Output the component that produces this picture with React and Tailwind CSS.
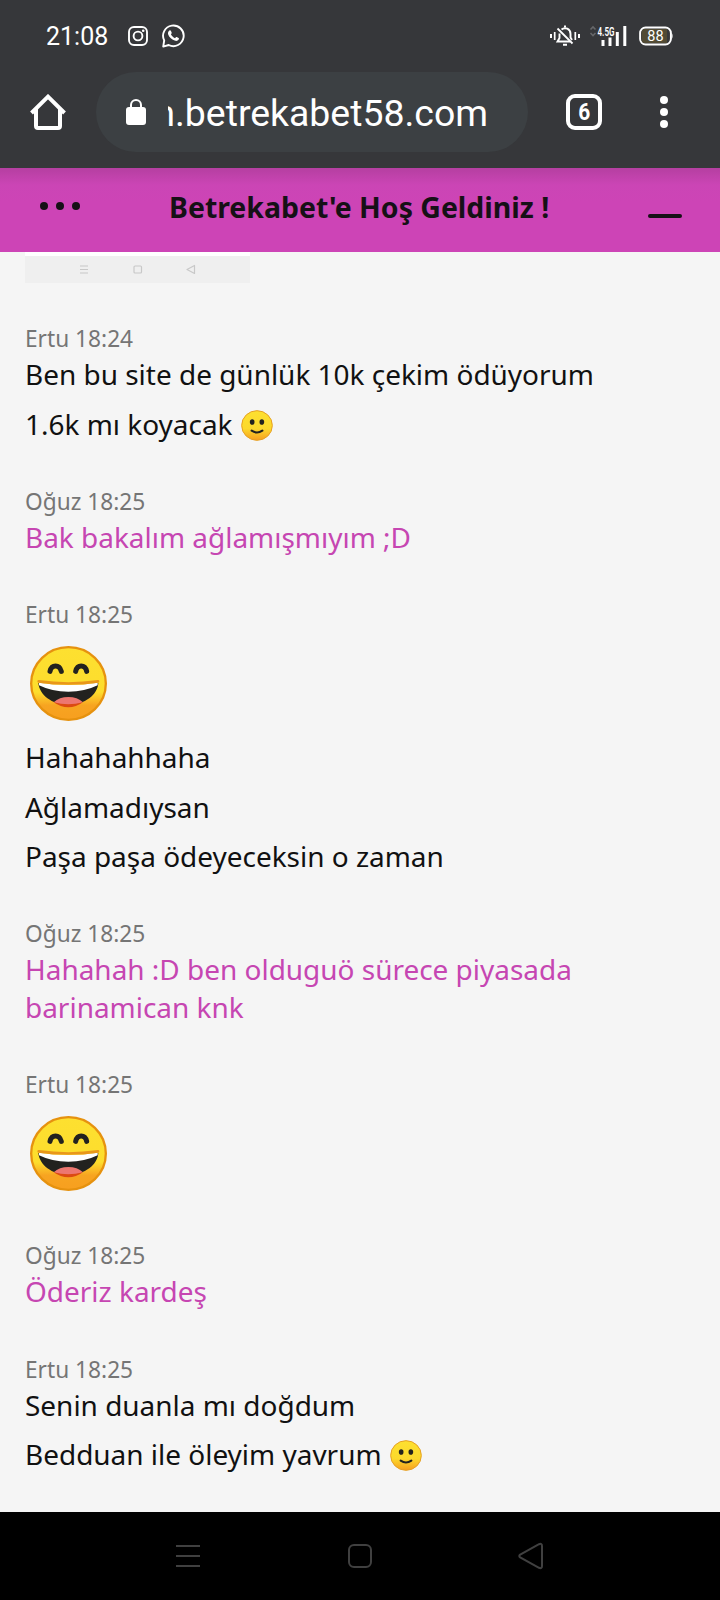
import React from "react";

const messages = [
  {
    name: "Ertu",
    time: "18:24",
    lines: [
      { text: "Ben bu site de günlük 10k çekim ödüyorum" },
      { text: "1.6k mı koyacak", smile: true },
    ],
  },
  {
    name: "Oğuz",
    time: "18:25",
    agent: true,
    lines: [{ text: "Bak bakalım ağlamışmıyım ;D" }],
  },
  {
    name: "Ertu",
    time: "18:25",
    lines: [
      { laugh: true },
      { text: "Hahahahhaha" },
      { text: "Ağlamadıysan" },
      { text: "Paşa paşa ödeyeceksin o zaman" },
    ],
  },
  {
    name: "Oğuz",
    time: "18:25",
    agent: true,
    lines: [{ text: "Hahahah :D ben olduguö sürece piyasada barinamican knk" }],
  },
  { name: "Ertu", time: "18:25", lines: [{ laugh: true }] },
  {
    name: "Oğuz",
    time: "18:25",
    agent: true,
    lines: [{ text: "Öderiz kardeş" }],
  },
  {
    name: "Ertu",
    time: "18:25",
    lines: [
      { text: "Senin duanla mı doğdum" },
      { text: "Bedduan ile öleyim yavrum", smile: true },
    ],
  },
];

const Laugh = () => {
  return (
    <svg
      width="77"
      height="75"
      viewBox="0 0 231 225"
      preserveAspectRatio="none"
      className="ml-[5px]"
    >
      <defs>
        <linearGradient id="laughFace" x1="0" y1="0" x2="0" y2="1">
          <stop offset="0" stopColor="#fde030" />
          <stop offset="0.62" stopColor="#fddd2d" />
          <stop offset="0.8" stopColor="#f7a421" />
          <stop offset="1" stopColor="#f79f1f" />
        </linearGradient>
      </defs>
      <ellipse
        cx="115.5"
        cy="112.5"
        rx="112"
        ry="109"
        fill="url(#laughFace)"
        stroke="#e6920f"
        strokeWidth="7"
      />
      <path
        d="M60 76C65 55 88 55 94 76M137 76C142 55 165 55 170 76"
        fill="none"
        stroke="#22221f"
        strokeWidth="15"
        strokeLinecap="round"
      />
      <path
        d="M25 111C28 146 65 176 115 176S203 146 205 111Q115 127 25 111Z"
        fill="#22221f"
      />
      <path d="M71 169Q88 153 115 153T159 169Q138 178 115 178T71 169Z" fill="#ed7770" />
      <path d="M71 169Q115 181 159 169Q138 184 115 184T71 169Z" fill="#dc4a12" />
      <path d="M27 110Q115 124 203 110L203 118Q165 137 115 137T27 118Z" fill="white" />
      <path
        d="M26 106Q115 119 204 106"
        fill="none"
        stroke="#e9971a"
        strokeWidth="8"
        strokeLinecap="round"
      />
    </svg>
  );
};

const Smile = () => {
  return (
    <svg
      width="32"
      height="31"
      viewBox="0 0 96 93"
      className="ml-px inline-block align-[-6px]"
    >
      <defs>
        <linearGradient id="smileFace" x1="0" y1="0" x2="0" y2="1">
          <stop offset="0" stopColor="#fde030" />
          <stop offset="0.6" stopColor="#fcd92c" />
          <stop offset="1" stopColor="#f79f1f" />
        </linearGradient>
      </defs>
      <ellipse
        cx="48"
        cy="46.5"
        rx="46"
        ry="44.5"
        fill="url(#smileFace)"
        stroke="#e6a023"
        strokeWidth="3"
      />
      <ellipse cx="33.5" cy="36" rx="7" ry="8.5" fill="#22221f" />
      <ellipse cx="62.5" cy="36" rx="7" ry="8.5" fill="#22221f" />
      <path
        d="M32 62Q48 73 64 62"
        fill="none"
        stroke="#22221f"
        strokeWidth="6.5"
        strokeLinecap="round"
      />
    </svg>
  );
};

const StatusBar = () => {
  return (
    <div className="flex h-[72px] items-center pl-[46px] pr-[46px] text-white">
      <span className="w-[82px] pt-px text-[25px] leading-none">21:08</span>
      <svg width="20" height="20" viewBox="0 0 20 20" fill="none" stroke="white">
        <rect x="1" y="1" width="18" height="18" rx="5" strokeWidth="1.9" />
        <circle cx="10" cy="10" r="4.4" strokeWidth="1.9" />
        <circle cx="15.2" cy="4.8" r="1.3" fill="white" stroke="none" />
      </svg>
      <svg
        width="23"
        height="24"
        viewBox="0 0 23 24"
        className="ml-[14px]"
        fill="none"
      >
        <path
          d="M1.2 22.6 2.2 16.5A10.3 10.3 0 1 1 6.7 21Z"
          stroke="white"
          strokeWidth="1.9"
          strokeLinejoin="round"
        />
        <path
          d="M7.4 6.4c.6-.4 1.2-.2 1.5.4l.8 1.9c.1.5-.1.9-.8 1.6.9 1.9 2.2 3.1 4.1 3.9.9-1 1.2-1.3 1.7-1.1l1.9 1c.5.3.4 1 .1 1.5-.7 1.2-2.1 1.5-3.4 1.2-3.4-.8-6.2-3.4-7.2-6.5-.4-1.6.1-3 1.3-3.9Z"
          fill="white"
        />
      </svg>
      <div className="ml-auto flex items-center">
        {/* muted, vibrating bell */}
        <svg width="30" height="22" viewBox="0 0 30 22" fill="none" stroke="white">
          <path d="M1 9v4M29 9v4" strokeWidth="2" />
          <path d="M4.7 7v8M25.3 7v8" strokeWidth="1.7" />
          <path
            d="M9.5 8.5v4.5L7.5 16.5H20M11.5 4.5C15 1.7 20.5 3.7 20.5 9v3.5L22 15"
            strokeWidth="1.9"
          />
          <path d="M7.5 3.5 22.5 18.5" strokeWidth="1.8" />
          <path d="M15 .5v2M13 19.8h4" strokeWidth="2" />
        </svg>
        <svg width="38" height="22" viewBox="0 0 38 22" className="ml-[9px]">
          <path
            d="M1.5 4.5 4 2 6.5 4.5M1.5 8 4 10.5 6.5 8"
            fill="none"
            stroke="#66676a"
            strokeWidth="1.6"
          />
          <text
            x="8.5"
            y="10.5"
            fill="white"
            fontSize="13"
            fontWeight="600"
            fontFamily="Roboto"
            textLength="17"
            lengthAdjust="spacingAndGlyphs"
          >
            4.5G
          </text>
          <path
            d="M12.5 15h3v6h-3zM19.5 12.5h3v8.5h-3zM26.8 7h3v14h-3zM34.3 1h3v20h-3z"
            fill="white"
          />
        </svg>
        <svg width="35" height="20" viewBox="0 0 35 20" className="ml-3">
          <rect
            x="1.1"
            y="1.5"
            width="30.8"
            height="17"
            rx="5.5"
            fill="#36373a"
            stroke="white"
            strokeWidth="1.9"
          />
          <path d="M6 3H28V17H6Q2.6 17 2.6 13.5V6.5Q2.6 3 6 3Z" fill="#524b34" />
          <path d="M32.5 6.5q2.3 3.5 0 7z" fill="white" />
          <text
            x="16.5"
            y="15"
            textAnchor="middle"
            fill="white"
            fontSize="14.5"
            fontFamily="Roboto"
          >
            88
          </text>
        </svg>
      </div>
    </div>
  );
};

const BrowserBar = () => {
  return (
    <div className="flex h-24 items-start pl-[30px] text-white">
      <svg
        width="36"
        height="36"
        viewBox="0 0 36 36"
        className="mt-[22px]"
        fill="none"
        stroke="white"
        strokeWidth="4"
      >
        <path d="M1.5 19 18 2.7 34.5 19" />
        <path d="M6 15v17q0 2 2 2H28q2 0 2-2V15" />
      </svg>
      <div className="ml-[30px] flex h-20 w-[432px] items-center rounded-full bg-[#3c4043] pl-[30px]">
        <svg width="20" height="26" viewBox="0 0 20 26">
          <path d="M5 9V6a5 5 0 0 1 10 0v3" fill="none" stroke="white" strokeWidth="2" />
          <rect y="8" width="20" height="18" rx="3" fill="white" />
        </svg>
        {/* long host names are cut on the left */}
        <div className="ml-[22px] flex w-[320px] justify-end overflow-hidden pt-0.5">
          <span className="text-[37.4px] leading-[48px]">m.betrekabet58.com</span>
        </div>
      </div>
      <svg width="36" height="36" viewBox="0 0 36 36" className="ml-[38px] mt-[22px]">
        <rect
          x="2"
          y="2"
          width="32"
          height="32"
          rx="7"
          fill="none"
          stroke="white"
          strokeWidth="4"
        />
        <text
          x="12.3"
          y="26"
          fill="white"
          fontSize="24"
          fontWeight="700"
          fontFamily="Roboto"
          textLength="12"
          lengthAdjust="spacingAndGlyphs"
        >
          6
        </text>
      </svg>
      <div className="ml-[58px] mt-6 flex flex-col gap-1">
        <div className="h-2 w-2 rounded-full bg-white"></div>
        <div className="h-2 w-2 rounded-full bg-white"></div>
        <div className="h-2 w-2 rounded-full bg-white"></div>
      </div>
    </div>
  );
};

const ChatHeader = () => {
  return (
    <div className="flex h-[84px] items-center bg-linear-to-b from-[#b53fa1] via-[#cb45b5] via-20% to-[#cd44b6] to-40% px-10 text-[#161016]">
      <div className="mb-[8px] flex w-[129px] gap-2">
        <div className="h-2 w-2 rounded-full bg-[#161016]"></div>
        <div className="h-2 w-2 rounded-full bg-[#161016]"></div>
        <div className="h-2 w-2 rounded-full bg-[#161016]"></div>
      </div>
      <h1 className="mb-[6px] whitespace-nowrap text-[28.45px] font-bold leading-[38px]">
        Betrekabet'e Hoş Geldiniz !
      </h1>
      <div className="ml-auto mr-[-2px] mt-[12px] h-1 w-[34px] rounded-full bg-[#161016]"></div>
    </div>
  );
};

const Message = ({ data }) => {
  return (
    <div className="pb-[31.75px]">
      <p className="text-[22.7px] leading-[32px] text-[#757575]">
        {data.name} {data.time}
      </p>
      {data.lines.map((line, index) => {
        if (line.laugh) {
          return (
            <div key={index} className="h-[107.5px] pt-[15px]">
              <Laugh />
            </div>
          );
        }
        return (
          <p
            key={index}
            className={`pb-[11.35px] text-[27.96px] leading-[38px] ${
              data.agent ? "text-[#c646b2]" : "text-[#111111]"
            }`}
          >
            {line.text} {line.smile && <Smile />}
          </p>
        );
      })}
    </div>
  );
};

const App = () => {
  return (
    <div className="flex h-[1600px] w-[720px] flex-col overflow-hidden bg-[#f5f5f5] font-['Noto_Sans',sans-serif]">
      <div className="bg-[#36373a] font-['Roboto',sans-serif]">
        <StatusBar />
        <BrowserBar />
      </div>
      <ChatHeader />
      <div className="flex-1 overflow-hidden px-[25px]">
        {/* bottom edge of the shared image */}
        <div className="h-[31px] w-[225px] border-t-4 border-white bg-[#efefef]">
          <svg
            width="225"
            height="27"
            viewBox="0 0 225 27"
            fill="none"
            stroke="#c8c8c8"
            strokeWidth="1.2"
          >
            <path d="M55 10h8M55 13.5h8M55 17h8" />
            <rect x="109" y="10" width="7.5" height="7" rx="1" />
            <path d="M169.5 9.5v8L162 13.5Z" strokeLinejoin="round" />
          </svg>
        </div>
        <div className="pt-[40.3px]">
          {messages.map((data, index) => {
            return <Message key={index} data={data} />;
          })}
        </div>
      </div>
      <div className="flex h-[88px] items-center justify-between bg-black px-[176px]">
        <svg width="24" height="26" viewBox="0 0 24 26" stroke="#404040" strokeWidth="2">
          <path d="M0 3h24M0 13h24M0 23h24" />
        </svg>
        <div className="ml-0.5 h-6 w-6 rounded-[6px] border-2 border-[#404040]"></div>
        <svg
          width="26"
          height="28"
          viewBox="0 0 26 28"
          fill="none"
          stroke="#404040"
          strokeWidth="2"
        >
          <path d="M2.2 12.6 21 2.2Q24 1 24 4V24Q24 27 21 25.8L2.2 15.4Q.4 14 2.2 12.6Z" />
        </svg>
      </div>
    </div>
  );
};

export default App;
